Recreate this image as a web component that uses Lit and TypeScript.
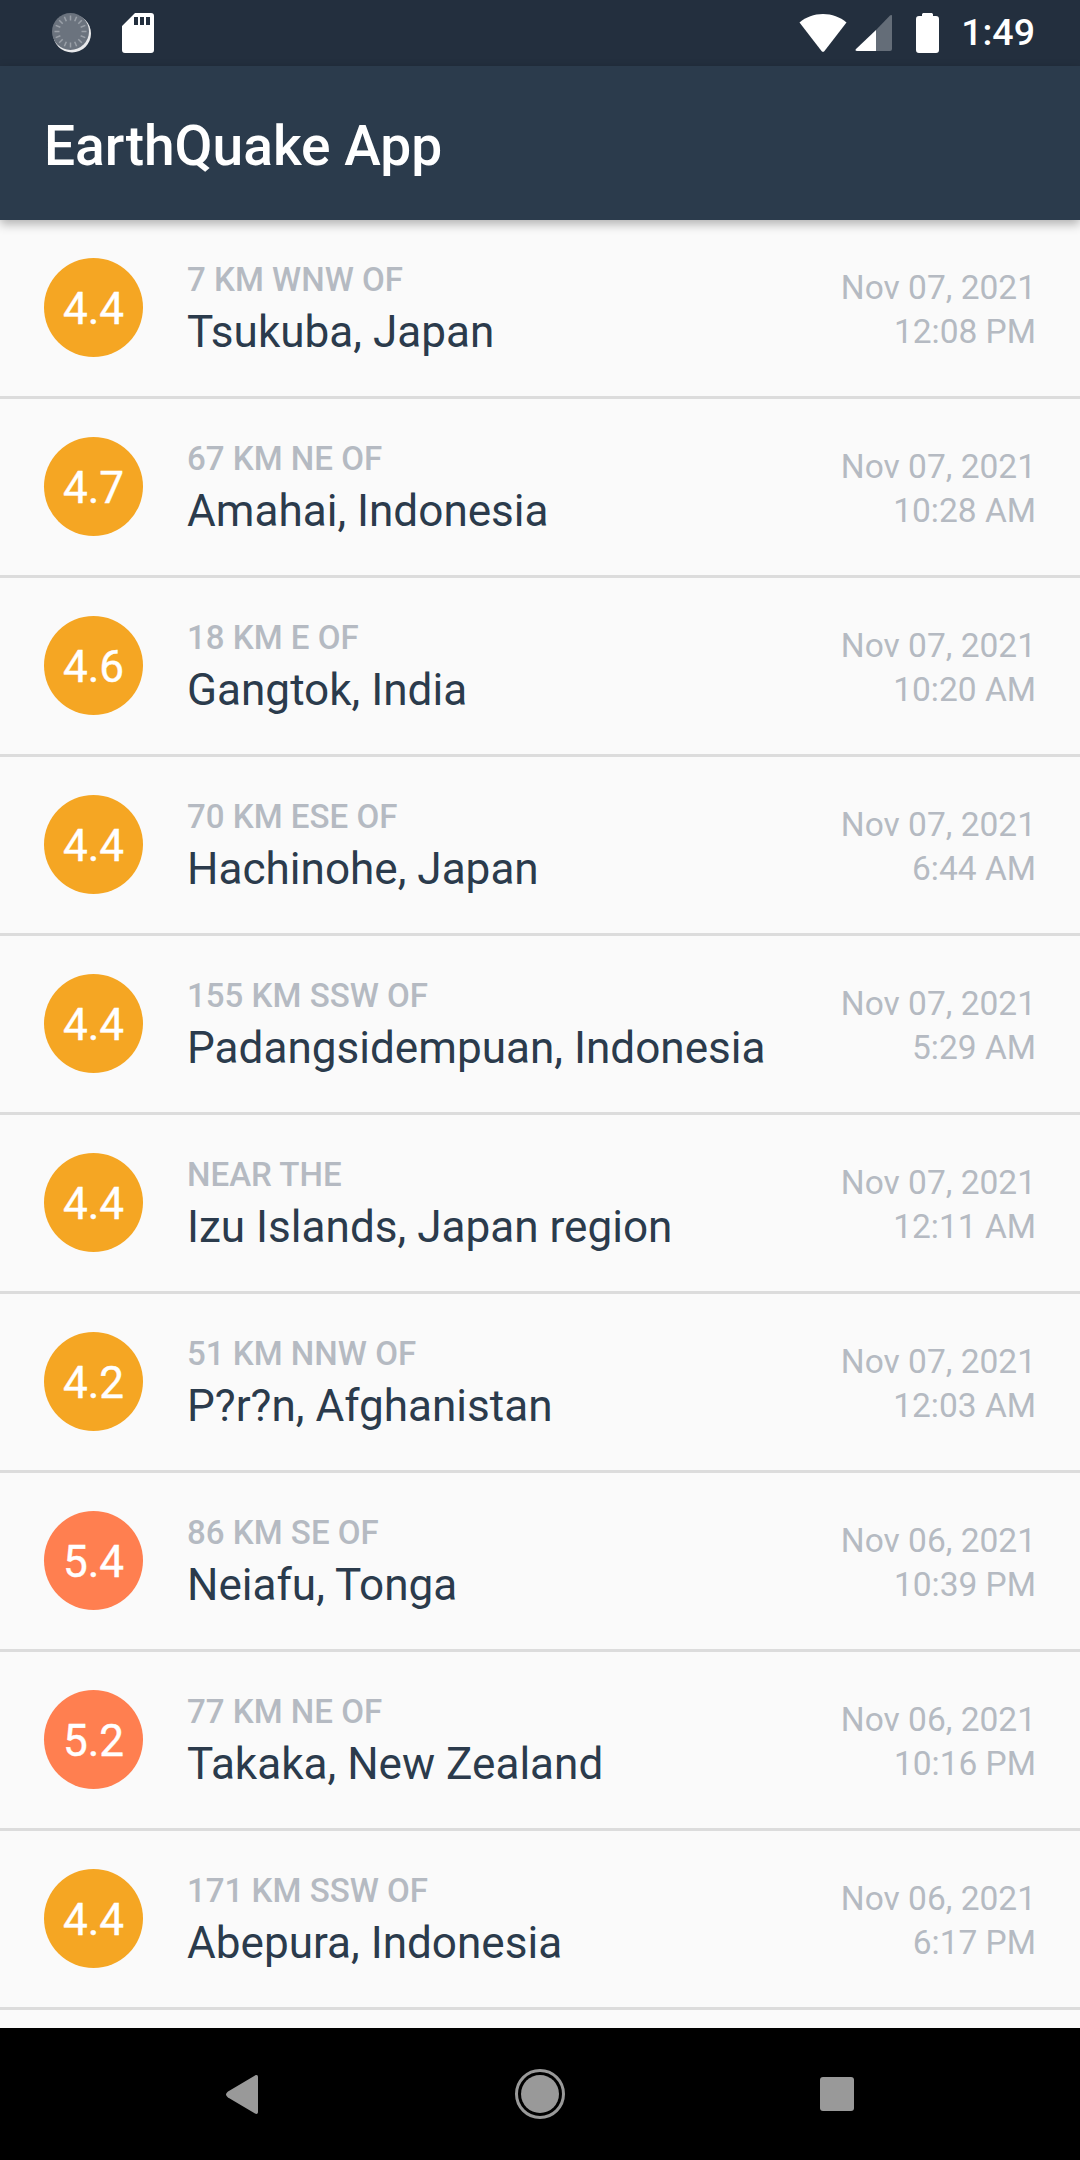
import { LitElement, html, css, svg } from 'lit';
import { customElement } from 'lit/decorators.js';

interface Quake {
  mag: string;
  offset: string;
  place: string;
  date: string;
  time: string;
}

const QUAKES: Quake[] = [
  { mag: '4.4', offset: '7 KM WNW OF', place: 'Tsukuba, Japan', date: 'Nov 07, 2021', time: '12:08 PM' },
  { mag: '4.7', offset: '67 KM NE OF', place: 'Amahai, Indonesia', date: 'Nov 07, 2021', time: '10:28 AM' },
  { mag: '4.6', offset: '18 KM E OF', place: 'Gangtok, India', date: 'Nov 07, 2021', time: '10:20 AM' },
  { mag: '4.4', offset: '70 KM ESE OF', place: 'Hachinohe, Japan', date: 'Nov 07, 2021', time: '6:44 AM' },
  { mag: '4.4', offset: '155 KM SSW OF', place: 'Padangsidempuan, Indonesia', date: 'Nov 07, 2021', time: '5:29 AM' },
  { mag: '4.4', offset: 'NEAR THE', place: 'Izu Islands, Japan region', date: 'Nov 07, 2021', time: '12:11 AM' },
  { mag: '4.2', offset: '51 KM NNW OF', place: 'P?r?n, Afghanistan', date: 'Nov 07, 2021', time: '12:03 AM' },
  { mag: '5.4', offset: '86 KM SE OF', place: 'Neiafu, Tonga', date: 'Nov 06, 2021', time: '10:39 PM' },
  { mag: '5.2', offset: '77 KM NE OF', place: 'Takaka, New Zealand', date: 'Nov 06, 2021', time: '10:16 PM' },
  { mag: '4.4', offset: '171 KM SSW OF', place: 'Abepura, Indonesia', date: 'Nov 06, 2021', time: '6:17 PM' },
];

// little ticks of the sync spinner in the status bar
const ticks = Array.from({ length: 16 }, (_, i) => (i * 360) / 16);

@customElement('app-root')
export class AppRoot extends LitElement {
  static styles = css`
    :host {
      display: block;
      width: 1080px;
      height: 2160px;
      font-family: Roboto, 'Liberation Sans', sans-serif;
      background: #fafafa;
    }

    .screen {
      display: flex;
      flex-direction: column;
      height: 2160px;
      overflow: hidden;
    }

    .status {
      flex: 0 0 66px;
      display: flex;
      align-items: center;
      background: #232f3e;
      color: #fff;
      padding: 0 45px 0 52px;
    }

    .status svg {
      display: block;
    }

    .sd {
      margin-left: 30px;
    }

    .spacer {
      flex: 1;
    }

    .signal {
      margin-left: 8px;
    }

    .battery {
      margin-left: 24px;
    }

    .clock {
      margin-left: 22px;
      font-size: 37.5px;
      font-weight: 500;
      line-height: 1;
    }

    .bar {
      flex: 0 0 154px;
      box-sizing: border-box;
      display: flex;
      align-items: center;
      padding: 6px 0 0 44px;
      background: #2b3b4c;
      color: #fff;
      font-size: 55.1px;
      font-weight: 500;
      box-shadow: 0 4px 10px rgba(0, 0, 0, 0.3);
      position: relative;
    }

    .list {
      flex: 1;
      overflow: hidden;
      background: #fafafa;
    }

    .row {
      height: 176px;
      display: flex;
      align-items: center;
      padding: 0 44px;
      border-bottom: 3px solid #dcdcdc;
    }

    .mag {
      flex: 0 0 99px;
      box-sizing: border-box;
      height: 99px;
      margin-top: -1px;
      padding-top: 3px;
      border-radius: 50%;
      background: #f5a623;
      color: #fff;
      display: flex;
      align-items: center;
      justify-content: center;
      font-size: 44.1px;
      -webkit-text-stroke: 0.4px #fff;
    }

    .mag.strong {
      background: #ff7f50;
    }

    .where {
      flex: 1;
      min-width: 0;
      margin-left: 44px;
      padding-top: 4px;
    }

    .offset {
      font-size: 33.1px;
      font-weight: 500;
      color: #b5bac2;
      line-height: 44px;
    }

    .place {
      font-size: 44.1px;
      color: #2b3b4c;
      line-height: 60px;
      white-space: nowrap;
    }

    .when {
      padding-top: 4px;
      text-align: right;
      font-size: 33.5px;
      color: #b5bac2;
      line-height: 44px;
      white-space: nowrap;
    }

    .nav {
      flex: 0 0 132px;
      background: #000;
      display: flex;
      align-items: center;
      justify-content: center;
    }

    .nav svg {
      display: block;
    }
  `;

  private renderSpinner() {
    return html`<svg width="40" height="40" viewBox="0 0 40 40">
      <circle cx="20" cy="20.500" r="19" fill="#e8e9eb"></circle>
      <circle cx="18.500" cy="18.500" r="18.500" fill="#6b737e"></circle>
      ${ticks.map(
        (a) => svg`<rect x="17.750" y="2.500" width="1.500" height="5" fill="#9aa0a8" transform="rotate(${a} 18.500 18.500)"></rect>`,
      )}
    </svg>`;
  }

  private renderStatus() {
    return html`<div class="status">
      ${this.renderSpinner()}
      <svg class="sd" width="32" height="40" viewBox="0 0 32 40">
        <path
          fill="#fff"
          fill-rule="evenodd"
          d="M13 0H29a3 3 0 0 1 3 3V37a3 3 0 0 1-3 3H3a3 3 0 0 1-3-3V13ZM12 4V12H16V4ZM18 4V12H22V4ZM24 4V12H28V4Z"
        ></path>
      </svg>
      <div class="spacer"></div>
      <svg width="48" height="38" viewBox="0 0 48 38">
        <path fill="#fff" d="M24 0C33 0 41 3 47.500 8.500L25.500 37a2 2 0 0 1-3 0L.5 8.500C7 3 15 0 24 0Z"></path>
      </svg>
      <svg class="signal" width="37" height="38" viewBox="0 0 37 38">
        <path fill="#646d78" d="M21 16L35 1.500C36 .5 37 1 37 2V35a2 2 0 0 1-2 2H21Z"></path>
        <path fill="#fff" d="M21 16V37H2C.5 37 0 36 1 35Z"></path>
      </svg>
      <svg class="battery" width="23" height="40" viewBox="0 0 23 40">
        <path
          fill="#fff"
          d="M6 3V1.500C6 .5 7 0 7.500 0H15.500C16 0 17 .5 17 1.500V3H20a3 3 0 0 1 3 3V37a3 3 0 0 1-3 3H3a3 3 0 0 1-3-3V6a3 3 0 0 1 3-3Z"
        ></path>
      </svg>
      <span class="clock">1:49</span>
    </div>`;
  }

  private renderRow(q: Quake) {
    const strong = parseFloat(q.mag) >= 5;
    return html`<div class="row">
      <div class="mag ${strong ? 'strong' : ''}">${q.mag}</div>
      <div class="where">
        <div class="offset">${q.offset}</div>
        <div class="place">${q.place}</div>
      </div>
      <div class="when">
        <div>${q.date}</div>
        <div>${q.time}</div>
      </div>
    </div>`;
  }

  private renderNav() {
    return html`<div class="nav">
      <svg width="628" height="50" viewBox="0 0 628 50">
        <path fill="#999" d="M0 25.500C0 24.500 1 23.500 2 22.500L29 6.500C31 5.500 32 6.500 32 8V43C32 44.500 31 45.500 29 44.500L2 28.500C1 27.500 0 26.500 0 25.500Z"></path>
        <circle cx="314" cy="25" r="23.500" fill="none" stroke="#999" stroke-width="3"></circle>
        <circle cx="314" cy="25" r="19" fill="#999"></circle>
        <rect x="594" y="8" width="34" height="34" rx="3" fill="#999"></rect>
      </svg>
    </div>`;
  }

  render() {
    return html`<div class="screen">
      ${this.renderStatus()}
      <div class="bar">EarthQuake App</div>
      <div class="list">${QUAKES.map((q) => this.renderRow(q))}</div>
      ${this.renderNav()}
    </div>`;
  }
}

declare global {
  interface HTMLElementTagNameMap {
    'app-root': AppRoot;
  }
}
